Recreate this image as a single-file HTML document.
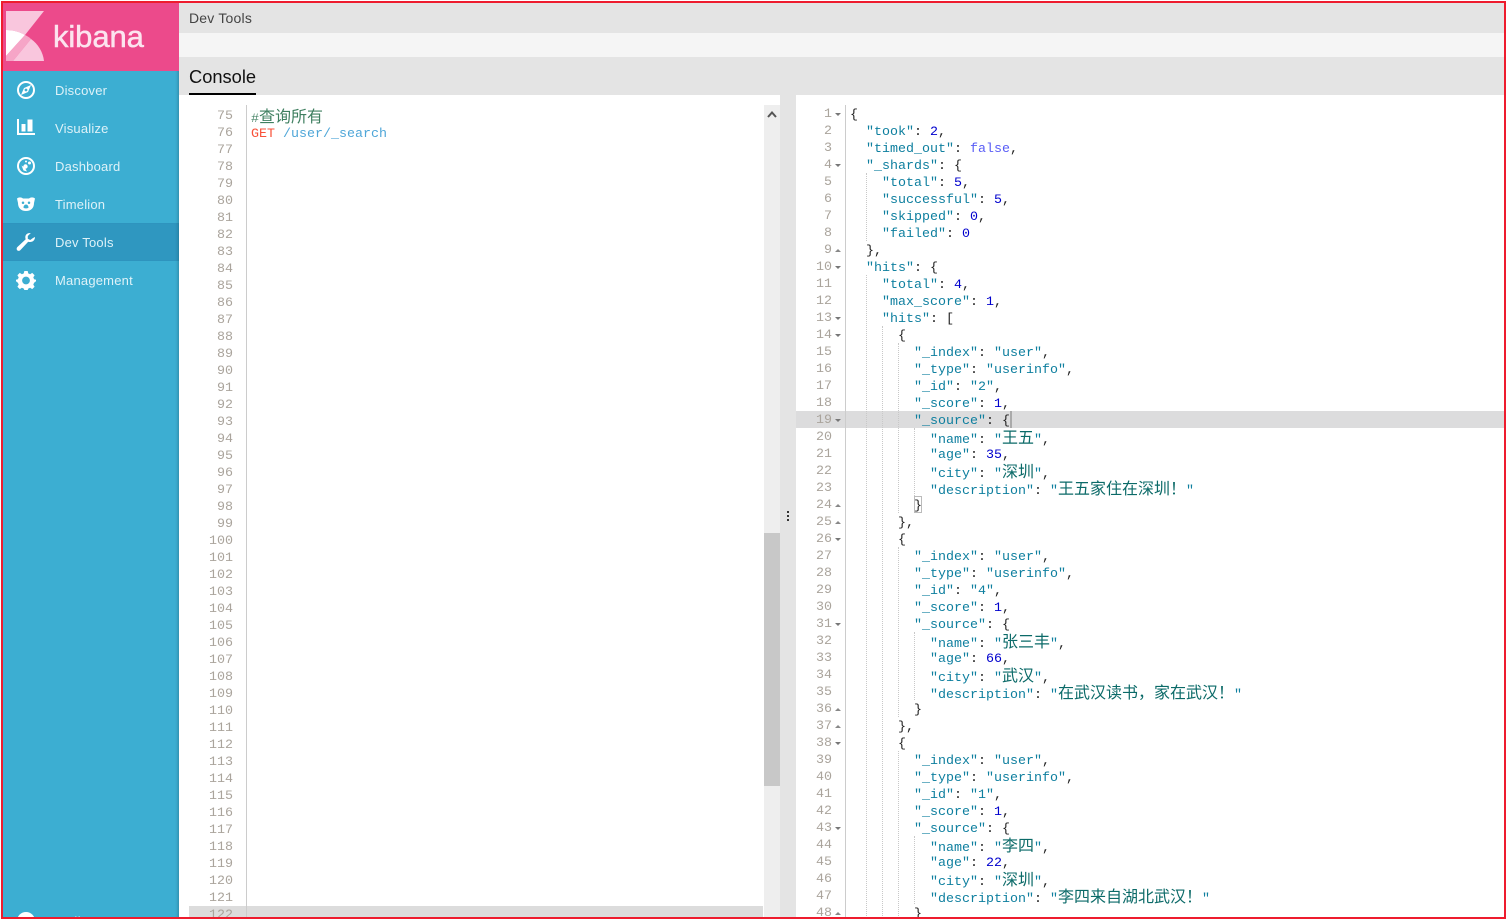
<!DOCTYPE html>
<html lang="zh">
<head>
<meta charset="utf-8">
<title>Dev Tools - Kibana</title>
<style>
html,body{margin:0;padding:0;width:1507px;height:920px;overflow:hidden;background:#fff}
#wrap{position:absolute;left:0;top:0;width:1507px;height:920px;overflow:hidden;clip-path:inset(1px 1px 1px 1px);font-family:"Liberation Sans",sans-serif}
#wrap div{box-sizing:border-box}
.abs{position:absolute}
#side{position:absolute;left:0;top:0;width:179px;height:920px;background:#3caed2;box-shadow:inset -3px 0 3px -2px rgba(0,0,0,.22)}
#logo{position:absolute;left:0;top:0;width:179px;height:71px;background:#ec4a8b}
#logotxt{position:absolute;left:53px;top:19px;font-size:31px;line-height:36px;color:#fce4ef;letter-spacing:-.1px;-webkit-text-stroke:.5px #fce4ef}
.mi{position:absolute;left:0;width:179px;height:38px;line-height:38px;padding-top:1px;padding-left:55px;font-size:13px;letter-spacing:.2px;color:#def2f8}
.mi.on{background:#2f97c0;box-shadow:inset -3px 0 3px -2px rgba(0,0,0,.2)}
.bar{position:absolute;left:179px;width:1328px;background:#e4e4e4}
#code-l,#code-r,#g-l,#g-r{position:absolute;font-family:"Liberation Mono","Noto Sans CJK SC",monospace;font-size:13.33px;line-height:17px}
#g-l,#g-r{color:#aaa49c;text-align:right}
#g-l div,#g-r div{height:17px;position:relative}
#code-l div,#code-r div{height:17px;position:relative;white-space:pre}
.c{top:-2px}
.z{font-family:"Noto Sans CJK SC",monospace;font-size:16px;letter-spacing:0;line-height:17px;font-weight:400;color:#0b6a68}
#code-r i,#code-l i{font-style:normal;color:#0e7f9f}
#code-r b{font-weight:normal;color:#0000cd}
#code-r u{text-decoration:none;color:#585cf6}
.d::after,.p::after{content:"";position:absolute;left:calc(100% + 3px);top:7px;border-left:3px solid transparent;border-right:3px solid transparent}
.d::after{border-top:3px solid #777}
.p::after{border-bottom:3px solid #888}
.g{position:absolute;width:0;border-left:1px dotted #c8c8c8}
</style>
</head>
<body>
<div id="wrap">

<div id="side">
  <div id="logo">
    <svg class="abs" style="left:0;top:0" width="60" height="71" viewBox="0 0 60 71">
      <path d="M6 11H44L25 35C20 32 13 30 6 30Z" fill="#f9c6dd"/>
      <path d="M6 30C13 30 20 32 25 35L6 56Z" fill="#fff"/>
      <path d="M6 56L25 35C27 36 29 37 31 39L13 61H6Z" fill="#f6a5c7"/>
      <path d="M13 61L31 39C38 44 43 52 44 61Z" fill="#f9c6dd"/>
    </svg>
    <div id="logotxt">kibana</div>
  </div>
  <div class="mi" style="top:71px">Discover</div>
  <div class="mi" style="top:109px">Visualize</div>
  <div class="mi" style="top:147px">Dashboard</div>
  <div class="mi" style="top:185px">Timelion</div>
  <div class="mi on" style="top:223px">Dev Tools</div>
  <div class="mi" style="top:261px">Management</div>
  <div class="mi" style="top:902px;padding-left:57px;color:#fff;letter-spacing:.4px">Collapse</div>
  <svg class="abs" style="left:0;top:0" width="60" height="920" viewBox="0 0 60 920">
    <circle cx="26" cy="90" r="8" fill="none" stroke="#fff" stroke-width="2"/>
    <path d="M31 85L28 92L21 95L24 88ZM26 88.6A1.4 1.4 0 1 0 26 91.4A1.4 1.4 0 1 0 26 88.6Z" fill="#fff" fill-rule="evenodd"/>
    <path d="M17 119H19V133H35V135H17Z" fill="#fff"/>
    <rect x="21.5" y="124" width="4" height="7.5" fill="#fff"/>
    <rect x="27.5" y="119.5" width="5" height="12" fill="#fff"/>
    <circle cx="26" cy="166" r="8" fill="none" stroke="#fff" stroke-width="2"/>
    <path d="M21.5 165.5L25 168L27 171.5L23.5 170.5Z" fill="#fff"/>
    <circle cx="25.5" cy="166.5" r="2.2" fill="#fff"/>
    <circle cx="29.5" cy="163" r="1.5" fill="#fff"/>
    <circle cx="26" cy="161.5" r="1" fill="#fff"/>
    <path d="M17 198.5C19 197 21 197 23 198.5H29C31 197 33 197 35 198.5L34 203C34 208 31 211 26 211C21 211 18 208 18 203ZM23 201.5A1.2 1.2 0 1 0 23 204A1.2 1.2 0 1 0 23 201.5ZM29 201.5A1.2 1.2 0 1 0 29 204A1.2 1.2 0 1 0 29 201.5ZM26 204.5C24.5 204.5 23.5 206 23.5 207.5C23.5 208.7 28.5 208.7 28.5 207.5C28.5 206 27.5 204.5 26 204.5Z" fill="#fff" fill-rule="evenodd"/>
    <path d="M35 237C35 240 33 242 30 242C29.3 242 28.7 241.9 28.2 241.7L20.5 250C19.3 251.3 17.6 251 17 250C16.4 249.2 16.5 247.8 17.7 246.8L25.7 239.2C25.4 238.6 25.3 238 25.3 237.3C25.3 234.5 27.5 232.8 30.8 233L27.8 236V238.7L30.2 240L33 238Z" fill="#fff"/>
    <path d="M24.3 271H27.7L28.2 273.4L30.1 274.2L32.2 272.9L34.6 275.3L33.3 277.4L34.1 279.3L36 279.8V281.2L34.1 282.7L33.3 284.6L34.6 286.7L32.2 289.1L30.1 287.8L28.2 288.6L27.7 290H24.3L23.8 288.6L21.9 287.8L19.8 289.1L17.4 286.7L18.7 284.6L17.9 282.7L16 281.2V279.8L17.9 279.3L18.7 277.4L17.4 275.3L19.8 272.9L21.9 274.2L23.8 273.4ZM26 276.6A3.9 3.9 0 1 0 26 284.4A3.9 3.9 0 1 0 26 276.6Z" fill="#fff" fill-rule="evenodd"/>
    <circle cx="26" cy="921" r="9" fill="#fff"/>
  </svg>
</div>

<div class="bar" style="top:0;height:33px"></div>
<div class="bar" style="top:33px;height:24px;background:#f5f5f5"></div>
<div class="bar" style="top:57px;height:38px"></div>
<div class="abs" style="left:189px;top:9px;font-size:14px;line-height:18px;color:#444;letter-spacing:.2px">Dev Tools</div>
<div class="abs" style="left:189px;top:65px;font-size:18.3px;line-height:24px;color:#111">Console</div>
<div class="abs" style="left:189px;top:93px;width:67px;height:2px;background:#000"></div>

<!-- left editor -->
<div class="abs" style="left:189px;top:906px;width:574px;height:14px;background:#dcdcdc"></div>
<div class="abs" style="left:246px;top:105px;width:1px;height:815px;background:#ccc"></div>
<div id="g-l" style="left:189px;top:108px;width:44px;white-space:pre">75
76
77
78
79
80
81
82
83
84
85
86
87
88
89
90
91
92
93
94
95
96
97
98
99
100
101
102
103
104
105
106
107
108
109
110
111
112
113
114
115
116
117
118
119
120
121
122</div>
<div id="code-l" style="left:251px;top:109px"><div class="c" style="color:#4c886b">#<span class="z" style="color:#3f7f60">查询所有</span></div><div><span style="color:#f8523a">GET</span> <span style="color:#4ea6d8">/user/_search</span></div></div>

<!-- scrollbar -->
<div class="abs" style="left:764px;top:105px;width:16px;height:815px;background:#eee"></div>
<div class="abs" style="left:764px;top:533px;width:16px;height:253px;background:#c8c8c8"></div>
<svg class="abs" style="left:764px;top:105px" width="16" height="16" viewBox="0 0 16 16"><path d="M4 12L8 7.5L12 12" fill="none" stroke="#555" stroke-width="2"/></svg>

<!-- resizer -->
<div class="abs" style="left:780px;top:95px;width:16px;height:825px;background:#e4e4e4"></div>
<div class="abs" style="left:787px;top:511px;width:2px;height:2px;background:#333"></div>
<div class="abs" style="left:787px;top:515px;width:2px;height:2px;background:#333"></div>
<div class="abs" style="left:787px;top:519px;width:2px;height:2px;background:#333"></div>

<!-- right editor -->
<div class="abs" style="left:796px;top:411px;width:711px;height:17px;background:#dcdcdd"></div>
<div class="abs" style="left:845px;top:105px;width:1px;height:815px;background:#ccc"></div>
<div class="abs" style="left:1010px;top:411px;width:2px;height:17px;background:#aaa"></div>
<div class="abs" style="left:914px;top:496px;width:8px;height:17px;border:1px solid #bbb"></div>

<div class="g" style="left:866px;top:173px;height:68px"></div>
<div class="g" style="left:866px;top:275px;height:645px"></div>
<div class="g" style="left:882px;top:326px;height:594px"></div>
<div class="g" style="left:898px;top:343px;height:170px"></div>
<div class="g" style="left:898px;top:547px;height:170px"></div>
<div class="g" style="left:898px;top:751px;height:169px"></div>
<div class="g" style="left:914px;top:428px;height:68px"></div>
<div class="g" style="left:914px;top:632px;height:68px"></div>
<div class="g" style="left:914px;top:836px;height:68px"></div>

<div id="g-r" style="left:796px;top:106px;width:36px"><div class="d">1</div><div>2</div><div>3</div><div class="d">4</div><div>5</div><div>6</div><div>7</div><div>8</div><div class="p">9</div><div class="d">10</div><div>11</div><div>12</div><div class="d">13</div><div class="d">14</div><div>15</div><div>16</div><div>17</div><div>18</div><div class="d">19</div><div>20</div><div>21</div><div>22</div><div>23</div><div class="p">24</div><div class="p">25</div><div class="d">26</div><div>27</div><div>28</div><div>29</div><div>30</div><div class="d">31</div><div>32</div><div>33</div><div>34</div><div>35</div><div class="p">36</div><div class="p">37</div><div class="d">38</div><div>39</div><div>40</div><div>41</div><div>42</div><div class="d">43</div><div>44</div><div>45</div><div>46</div><div>47</div><div class="p">48</div></div>

<div id="code-r" style="left:850px;top:107px;color:#222"><div>{</div><div>  <i>"took"</i>: <b>2</b>,</div><div>  <i>"timed_out"</i>: <u>false</u>,</div><div>  <i>"_shards"</i>: {</div><div>    <i>"total"</i>: <b>5</b>,</div><div>    <i>"successful"</i>: <b>5</b>,</div><div>    <i>"skipped"</i>: <b>0</b>,</div><div>    <i>"failed"</i>: <b>0</b></div><div>  },</div><div>  <i>"hits"</i>: {</div><div>    <i>"total"</i>: <b>4</b>,</div><div>    <i>"max_score"</i>: <b>1</b>,</div><div>    <i>"hits"</i>: [</div><div>      {</div><div>        <i>"_index"</i>: <i>"user"</i>,</div><div>        <i>"_type"</i>: <i>"userinfo"</i>,</div><div>        <i>"_id"</i>: <i>"2"</i>,</div><div>        <i>"_score"</i>: <b>1</b>,</div><div>        <i>"_source"</i>: {</div><div class="c">          <i>"name"</i>: <i>"<span class="z">王五</span>"</i>,</div><div>          <i>"age"</i>: <b>35</b>,</div><div class="c">          <i>"city"</i>: <i>"<span class="z">深圳</span>"</i>,</div><div class="c">          <i>"description"</i>: <i>"<span class="z">王五家住在深圳！</span>"</i></div><div>        }</div><div>      },</div><div>      {</div><div>        <i>"_index"</i>: <i>"user"</i>,</div><div>        <i>"_type"</i>: <i>"userinfo"</i>,</div><div>        <i>"_id"</i>: <i>"4"</i>,</div><div>        <i>"_score"</i>: <b>1</b>,</div><div>        <i>"_source"</i>: {</div><div class="c">          <i>"name"</i>: <i>"<span class="z">张三丰</span>"</i>,</div><div>          <i>"age"</i>: <b>66</b>,</div><div class="c">          <i>"city"</i>: <i>"<span class="z">武汉</span>"</i>,</div><div class="c">          <i>"description"</i>: <i>"<span class="z">在武汉读书，家在武汉！</span>"</i></div><div>        }</div><div>      },</div><div>      {</div><div>        <i>"_index"</i>: <i>"user"</i>,</div><div>        <i>"_type"</i>: <i>"userinfo"</i>,</div><div>        <i>"_id"</i>: <i>"1"</i>,</div><div>        <i>"_score"</i>: <b>1</b>,</div><div>        <i>"_source"</i>: {</div><div class="c">          <i>"name"</i>: <i>"<span class="z">李四</span>"</i>,</div><div>          <i>"age"</i>: <b>22</b>,</div><div class="c">          <i>"city"</i>: <i>"<span class="z">深圳</span>"</i>,</div><div class="c">          <i>"description"</i>: <i>"<span class="z">李四来自湖北武汉！</span>"</i></div><div>        }</div></div>

</div>
<div style="position:absolute;left:1px;top:1px;width:1505px;height:918px;border:2px solid #ee1c2e;box-sizing:border-box;pointer-events:none"></div>
</body>
</html>
